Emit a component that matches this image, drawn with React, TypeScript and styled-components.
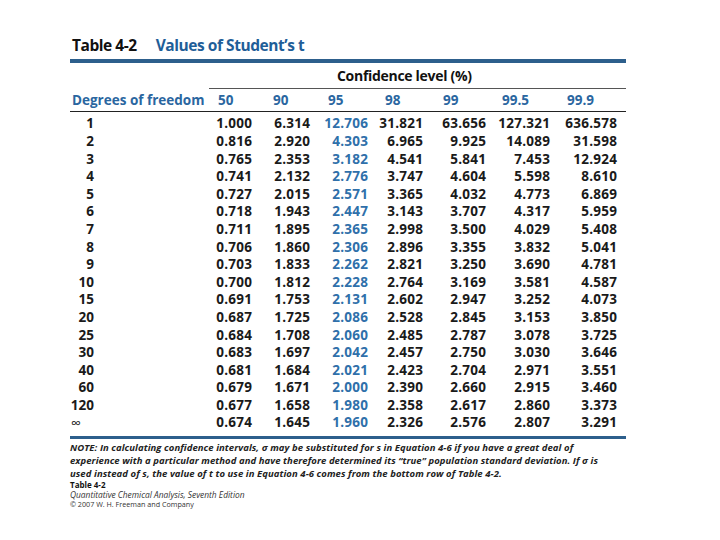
import React from "react";
import styled, { createGlobalStyle } from "styled-components";

const GlobalStyle = createGlobalStyle`
  html, body { margin: 0; padding: 0; background: #ffffff; }
  body { font-family: "Open Sans", "Noto Sans", sans-serif; color: #1a1a1a; }
`;

const BLUE = "#2a66a0";
const RULE = "#2d5f8c";
const COLS = "139px 43px 58px 58px 55px 63px 64px 67px";

const Page = styled.div`
  width: 556px;
  padding: 35px 0 0 70px;
`;

const Title = styled.h1`
  margin: 0;
  display: flex;
  gap: 19px;
  font-size: 15.5px;
  line-height: 20px;
  font-weight: 700;
  letter-spacing: -0.45px;
  padding-left: 2px;
`;

const TitleLabel = styled.span<{ $blue?: boolean }>`
  color: ${(p) => (p.$blue ? "#1f5e98" : "#111")};
`;

const Rule = styled.div<{ $top: number; $h: number }>`
  margin-top: ${(p) => p.$top}px;
  height: ${(p) => p.$h}px;
  background: ${RULE};
`;

const ConfRow = styled.div`
  margin-left: 139px;
  height: 26px;
  box-sizing: border-box;
  padding: 3px 0 0 128px;
  border-bottom: 1px solid #555;
  font-size: 14px;
  line-height: 20px;
  font-weight: 700;
  letter-spacing: -0.3px;
  color: #111;
`;

const HeadRow = styled.div`
  display: grid;
  grid-template-columns: ${COLS};
  height: 22px;
  align-items: center;
  border-bottom: 1px solid #222;
  font-size: 13.5px;
  font-weight: 700;
  color: ${BLUE};
`;

const HeadCell = styled.div<{ $indent: number }>`
  padding-left: ${(p) => p.$indent}px;
  white-space: nowrap;
`;

const Body = styled.div`
  padding: 3.4px 0 4px;
`;

const DataRow = styled.div`
  display: grid;
  grid-template-columns: ${COLS};
  height: 17.6px;
  align-items: center;
  font-size: 13.5px;
  line-height: 17.6px;
  font-weight: 700;
  letter-spacing: 0.25px;
`;

const DofCell = styled.div<{ $inf?: boolean }>`
  width: ${(p) => (p.$inf ? "auto" : "24px")};
  padding-left: ${(p) => (p.$inf ? "1px" : "0")};
  text-align: ${(p) => (p.$inf ? "left" : "right")};
  font-weight: ${(p) => (p.$inf ? 400 : 700)};
  font-size: ${(p) => (p.$inf ? "14px" : "13.5px")};
  letter-spacing: 0;
  color: #1a1a1a;
`;

const NumCell = styled.div<{ $blue?: boolean }>`
  text-align: right;
  margin-right: -0.25px;
  color: ${(p) => (p.$blue ? "#2f70aa" : "#1a1a1a")};
`;

const Note = styled.div`
  margin-top: 2px;
  display: flex;
  flex-direction: column;
  font-size: 9.5px;
  line-height: 13px;
  letter-spacing: 0.07px;
  font-style: italic;
  font-weight: 700;
  color: #222;
  white-space: nowrap;
`;

const NoteLine = styled.div``;

const Footer = styled.div`
  display: flex;
  flex-direction: column;
  color: #333;
`;

const FootLine = styled.div<{ $bold?: boolean; $italic?: boolean; $lh: number; $size: number }>`
  font-size: ${(p) => p.$size}px;
  line-height: ${(p) => p.$lh}px;
  font-weight: ${(p) => (p.$bold ? 700 : 400)};
  font-style: ${(p) => (p.$italic ? "italic" : "normal")};
  color: ${(p) => (p.$bold ? "#111" : "#333")};
  white-space: nowrap;
`;

const headers: { label: string; indent: number }[] = [
  { label: "Degrees of freedom", indent: 2 },
  { label: "50", indent: 9 },
  { label: "90", indent: 21 },
  { label: "95", indent: 18 },
  { label: "98", indent: 17 },
  { label: "99", indent: 20 },
  { label: "99.5", indent: 16 },
  { label: "99.9", indent: 17 },
];

const rows: [string, string[]][] = [
  ["1", ["1.000", "6.314", "12.706", "31.821", "63.656", "127.321", "636.578"]],
  ["2", ["0.816", "2.920", "4.303", "6.965", "9.925", "14.089", "31.598"]],
  ["3", ["0.765", "2.353", "3.182", "4.541", "5.841", "7.453", "12.924"]],
  ["4", ["0.741", "2.132", "2.776", "3.747", "4.604", "5.598", "8.610"]],
  ["5", ["0.727", "2.015", "2.571", "3.365", "4.032", "4.773", "6.869"]],
  ["6", ["0.718", "1.943", "2.447", "3.143", "3.707", "4.317", "5.959"]],
  ["7", ["0.711", "1.895", "2.365", "2.998", "3.500", "4.029", "5.408"]],
  ["8", ["0.706", "1.860", "2.306", "2.896", "3.355", "3.832", "5.041"]],
  ["9", ["0.703", "1.833", "2.262", "2.821", "3.250", "3.690", "4.781"]],
  ["10", ["0.700", "1.812", "2.228", "2.764", "3.169", "3.581", "4.587"]],
  ["15", ["0.691", "1.753", "2.131", "2.602", "2.947", "3.252", "4.073"]],
  ["20", ["0.687", "1.725", "2.086", "2.528", "2.845", "3.153", "3.850"]],
  ["25", ["0.684", "1.708", "2.060", "2.485", "2.787", "3.078", "3.725"]],
  ["30", ["0.683", "1.697", "2.042", "2.457", "2.750", "3.030", "3.646"]],
  ["40", ["0.681", "1.684", "2.021", "2.423", "2.704", "2.971", "3.551"]],
  ["60", ["0.679", "1.671", "2.000", "2.390", "2.660", "2.915", "3.460"]],
  ["120", ["0.677", "1.658", "1.980", "2.358", "2.617", "2.860", "3.373"]],
  ["∞", ["0.674", "1.645", "1.960", "2.326", "2.576", "2.807", "3.291"]],
];

export default function App() {
  return (
    <>
      <GlobalStyle />
      <Page>
        <Title>
          <TitleLabel>Table 4-2</TitleLabel>
          <TitleLabel $blue>Values of Student’s t</TitleLabel>
        </Title>
        <Rule $top={4} $h={4} />
        <ConfRow>Confidence level (%)</ConfRow>
        <HeadRow>
          {headers.map((h) => (
            <HeadCell key={h.label} $indent={h.indent}>
              {h.label}
            </HeadCell>
          ))}
        </HeadRow>
        <Body>
          {rows.map(([dof, vals]) => (
            <DataRow key={dof}>
              <DofCell $inf={dof === "∞"}>{dof}</DofCell>
              {vals.map((v, i) => (
                <NumCell key={i} $blue={i === 2}>
                  {v}
                </NumCell>
              ))}
            </DataRow>
          ))}
        </Body>
        <Rule $top={0} $h={3} />
        <Note>
          <NoteLine>
            NOTE: In calculating confidence intervals, σ may be substituted for s in Equation 4-6 if you have a great deal of
          </NoteLine>
          <NoteLine>
            experience with a particular method and have therefore determined its “true” population standard deviation. If σ is
          </NoteLine>
          <NoteLine>
            used instead of s, the value of t to use in Equation 4-6 comes from the bottom row of Table 4-2.
          </NoteLine>
        </Note>
        <Footer>
          <FootLine $bold $lh={10} $size={8}>Table 4-2</FootLine>
          <FootLine $italic $lh={9} $size={8.4}>Quantitative Chemical Analysis, Seventh Edition</FootLine>
          <FootLine $lh={10} $size={7.2}>© 2007 W. H. Freeman and Company</FootLine>
        </Footer>
      </Page>
    </>
  );
}
